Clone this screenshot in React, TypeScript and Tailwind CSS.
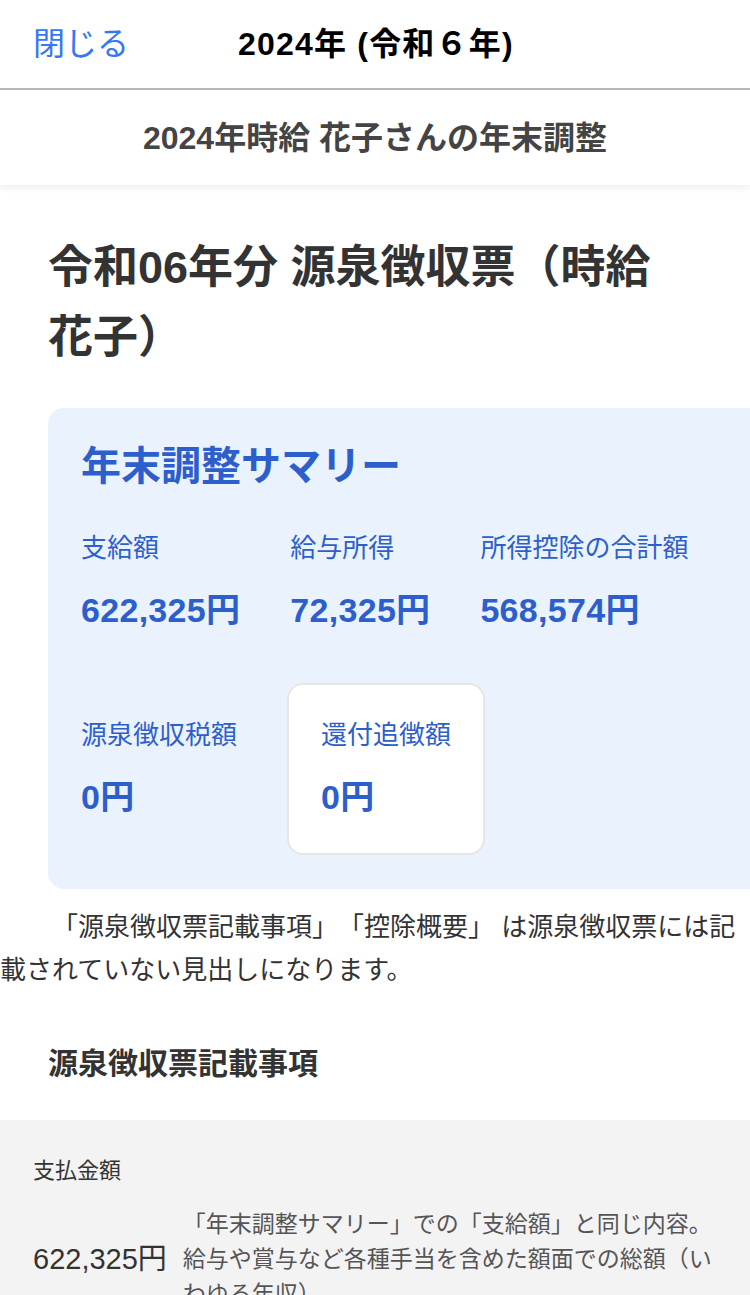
import React from "react";

const font = {
  fontFamily: '"Liberation Sans", "Noto Sans CJK JP", sans-serif',
};

const summary = [
  { label: "支給額", value: "622,325円" },
  { label: "給与所得", value: "72,325円" },
  { label: "所得控除の合計額", value: "568,574円" },
  { label: "源泉徴収税額", value: "0円" },
  { label: "還付追徴額", value: "0円", highlight: true },
];

const SummaryItem = ({
  label,
  value,
  highlight,
}: {
  label: string;
  value: string;
  highlight?: boolean;
}) => (
  <div
    className={
      highlight
        ? "flex flex-col gap-[18px] py-[31px] px-[32px] bg-white border-2 border-[#e6e6e6] rounded-[16px]"
        : "flex flex-col gap-[18px] py-[33px]"
    }
  >
    <span className="text-[26px] leading-[38px] text-[#2d5fcc]">{label}</span>
    <span className="text-[34px] leading-[50px] font-bold text-[#2d5fcc] tracking-[0.3px]">{value}</span>
  </div>
);

export default function App() {
  return (
    <div className="w-[750px] min-h-[1295px] bg-white overflow-hidden [text-spacing-trim:space-all]" style={font}>
      {/* Top bar */}
      <header className="relative h-[90px] flex items-center border-b-2 border-[#b8b8b8]">
        <button className="ml-[33px] text-[32px] text-[#3478f6]">閉じる</button>
        <div className="absolute left-[238px] top-0 h-full flex items-center text-[32px] font-bold text-black tracking-[1.2px]">
          2024年 (令和６年)
        </div>
      </header>

      {/* Sub header */}
      <div className="h-[95px] flex items-center justify-center bg-white shadow-[0_4px_6px_rgba(0,0,0,0.06)]">
        <h2 className="text-[32px] font-bold text-[#444]">2024年時給 花子さんの年末調整</h2>
      </div>

      <main className="pt-[48px]">
        <h1 className="ml-[48px] w-[622px] text-[45px] leading-[70px] font-bold text-[#333]">
          令和06年分 源泉徴収票（時給花子）
        </h1>

        {/* Summary card */}
        <section className="ml-[48px] mt-[35px] w-[720px] bg-[#eaf2fd] rounded-[16px] pt-[32px] pb-[34px] pl-[33px] pr-[33px]">
          <h3 className="text-[40px] leading-[52px] font-bold text-[#2d5fcc]">年末調整サマリー</h3>
          <div className="mt-[4px] w-[636px] flex flex-wrap items-center gap-x-[50px] gap-y-[15px]">
            {summary.map((s) => (
              <SummaryItem key={s.label} {...s} />
            ))}
          </div>
        </section>

        <p className="mt-[17px] text-[26px] leading-[43px] text-[#333] indent-[52px]">
          「源泉徴収票記載事項」「控除概要」 は源泉徴収票には記載されていない見出しになります。
        </p>

        <h3 className="mt-[50px] px-[48px] text-[30px] leading-[44px] font-bold text-[#333]">
          源泉徴収票記載事項
        </h3>

        <div className="mt-[34px] bg-[#f4f3f4] px-[33px] pt-[36px] pb-[40px]">
          <div className="text-[22px] leading-[30px] text-[#333]">支払金額</div>
          <div className="mt-[21px] flex items-center gap-[16px]">
            <span className="text-[29px] text-[#333] shrink-0">622,325円</span>
            <span className="text-[23px] leading-[35px] text-[#555]">
              「年末調整サマリー」での「支給額」と同じ内容。給与や賞与など各種手当を含めた額面での総額（いわゆる年収）
            </span>
          </div>
        </div>
      </main>
    </div>
  );
}
